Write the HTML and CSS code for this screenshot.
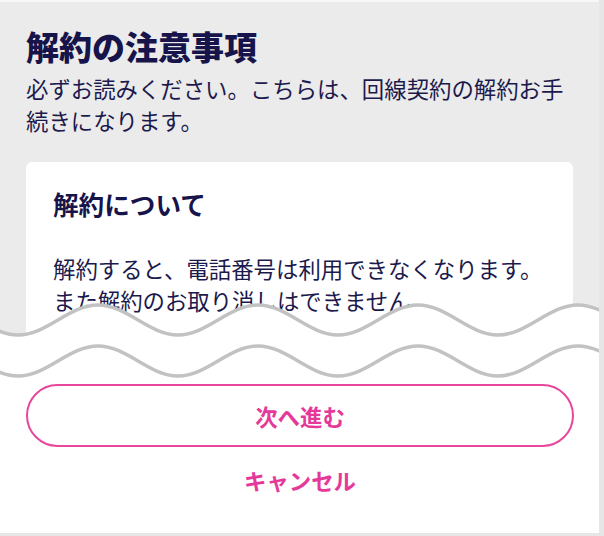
FILE: index.html
```html
<!DOCTYPE html>
<html lang="ja">
<head>
    <meta charset="UTF-8">
    <meta name="viewport" content="width=device-width, initial-scale=1.0">
    <title>解約の注意事項</title>
    <link rel="stylesheet" href="styles.css">
</head>
<body>
    <div class="screen">
        <div class="top">
            <h1 class="page-title">解約の注意事項</h1>
            <p class="lead">必ずお読みください。こちらは、回線契約の解約お手続きになります。</p>

            <div class="card">
                <h2 class="card-title">解約について</h2>
                <p class="card-text">解約すると、電話番号は利用できなくなります。<br>また解約のお取り消しはできません。</p>
            </div>

            <!-- cut-off waves -->
            <svg class="waves" width="600" height="80" viewBox="0 0 600 80">
                <path fill="#fff" d="M -62 5 C -33 5 -11 35 18 35 S 69 5 98 5 S 149 35 178 35 S 229 5 258 5 S 309 35 338 35 S 389 5 418 5 S 469 35 498 35 S 549 5 578 5 S 629 35 658 35 L 658 80 L -62 80 Z"/>
                <path class="wave-line" d="M -62 5 C -33 5 -11 35 18 35 S 69 5 98 5 S 149 35 178 35 S 229 5 258 5 S 309 35 338 35 S 389 5 418 5 S 469 35 498 35 S 549 5 578 5 S 629 35 658 35"/>
                <path class="wave-line" transform="translate(0 41)" d="M -62 5 C -33 5 -11 35 18 35 S 69 5 98 5 S 149 35 178 35 S 229 5 258 5 S 309 35 338 35 S 389 5 418 5 S 469 35 498 35 S 549 5 578 5 S 629 35 658 35"/>
            </svg>
        </div>

        <div class="actions">
            <button class="btn-next">次へ進む</button>
            <button class="btn-cancel">キャンセル</button>
        </div>
    </div>
</body>
</html>
```

FILE: styles.css
```css
html, body {
    margin: 0;
    padding: 0;
}
body {
    background: #e6e6e6;
    font-family: "Noto Sans CJK JP", "Noto Sans", sans-serif;
    color: #1c1a4d;
}
.screen {
    width: 599px;
    height: 531px;
    border-top: 2px solid #f7f7f7;
    background: #fff;
    overflow: hidden;
}
.top {
    position: relative;
    height: 378px;
    overflow: hidden;
    background: #ebebeb;
    padding: 20px 26px 0 26px;
    box-sizing: border-box;
}
.page-title {
    margin: 0;
    font-size: 33px;
    line-height: 48px;
    font-weight: 900;
    color: #16144a;
}
.lead {
    margin: 2px 0 0 0;
    font-size: 22.4px;
    line-height: 32px;
    color: #1c1a4c;
}
.card {
    margin-top: 26px;
    background: #fff;
    border-radius: 6px;
    padding: 24px 26px 40px 27px;
}
.card-title {
    margin: 0;
    font-size: 25.6px;
    line-height: 36px;
    font-weight: 700;
    color: #16144a;
}
.card-text {
    margin: 30px 0 0 0;
    font-size: 22.4px;
    line-height: 32px;
    color: #1c1a4c;
}
.waves {
    position: absolute;
    left: 0;
    bottom: 0;
    display: block;
}
.wave-line {
    fill: none;
    stroke: #c2c2c2;
    stroke-width: 3.5;
}
.actions {
    padding: 4px 25px 0 26px;
    display: flex;
    flex-direction: column;
    align-items: center;
}
.btn-next {
    width: 100%;
    height: 63px;
    border: 2px solid #e8479b;
    border-radius: 32px;
    background: #fff;
    color: #e5399a;
    font-family: inherit;
    font-size: 22.4px;
    font-weight: 700;
    cursor: pointer;
}
.btn-cancel {
    margin-top: 17px;
    border: none;
    background: none;
    padding: 0;
    color: #e5399a;
    font-family: inherit;
    font-size: 22.4px;
    line-height: 32px;
    font-weight: 700;
    cursor: pointer;
}
```
